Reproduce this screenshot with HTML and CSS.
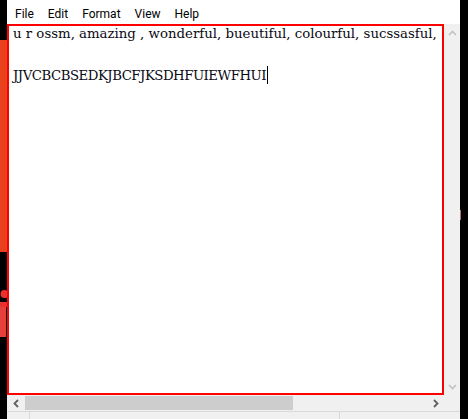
FILE: index.html
```html
<!DOCTYPE html>
<html>
<head>
<meta charset="utf-8">
<link rel="stylesheet" href="styles.css">
</head>
<body>
<div class="side-left">
  <svg width="7" height="419" viewBox="0 0 7 419">
    <rect x="0" y="0" width="7" height="419" fill="#000"/>
    <rect x="0" y="40" width="7" height="212" fill="#e8411b"/>
    <circle cx="4.5" cy="294" r="4" fill="#e8322f"/>
    <rect x="0" y="302" width="7" height="5" fill="#e8322f"/>
    <rect x="0" y="307" width="6" height="30" fill="#e6403d"/>
  </svg>
</div>
<div class="window">
  <div class="menubar">
    <span class="menu-item">File</span>
    <span class="menu-item">Edit</span>
    <span class="menu-item">Format</span>
    <span class="menu-item">View</span>
    <span class="menu-item">Help</span>
  </div>
  <div class="main">
    <div class="editor">
      <div class="text">u r ossm, amazing , wonderful, bueutiful, colourful, sucssasful,</div>
      <div class="text">&nbsp;</div>
      <div class="text caps">JJVCBCBSEDKJBCFJKSDHFUIEWFHUI<span class="caret"></span></div>
    </div>
    <div class="vscroll">
      <div class="sbtn">
        <svg width="9" height="6" viewBox="0 0 9 6"><path d="M1 5 L4.5 1.5 L8 5" fill="none" stroke="#c2c2c2" stroke-width="1.6"/></svg>
      </div>
      <div class="sbtn">
        <svg width="9" height="6" viewBox="0 0 9 6"><path d="M1 1 L4.5 4.5 L8 1" fill="none" stroke="#c2c2c2" stroke-width="1.6"/></svg>
      </div>
    </div>
  </div>
  <div class="hrow">
    <div class="hscroll">
      <div class="hbtn">
        <svg width="6" height="9" viewBox="0 0 6 9"><path d="M5 1 L1.5 4.5 L5 8" fill="none" stroke="#606060" stroke-width="1.8"/></svg>
      </div>
      <div class="track">
        <div class="thumb"></div>
      </div>
      <div class="hbtn">
        <svg width="6" height="9" viewBox="0 0 6 9"><path d="M1 1 L4.5 4.5 L1 8" fill="none" stroke="#606060" stroke-width="1.8"/></svg>
      </div>
    </div>
    <div class="corner"></div>
  </div>
  <div class="status">
    <div class="cell cell-a"></div>
    <div class="cell cell-b"></div>
    <div class="cell cell-c"></div>
  </div>
</div>
<div class="side-right">
  <div class="mark"></div>
</div>
</body>
</html>
```
FILE: styles.css
```css
html, body {
  margin: 0;
  padding: 0;
}
body {
  width: 468px;
  height: 419px;
  overflow: hidden;
  display: flex;
  background: #000;
}
.side-left {
  width: 7px;
  height: 419px;
  flex: none;
}
.side-left svg {
  display: block;
}
.window {
  width: 453px;
  height: 419px;
  flex: none;
  display: flex;
  flex-direction: column;
  background: #fff;
}
.menubar {
  height: 24px;
  box-sizing: border-box;
  padding: 4px 0 0 1px;
  display: flex;
  font-family: Roboto, "Noto Sans", sans-serif;
  font-size: 12px;
  line-height: 20px;
  color: #000;
}
.menu-item {
  padding: 0 7px;
}
.main {
  height: 371px;
  display: flex;
}
.editor {
  width: 437px;
  height: 371px;
  box-sizing: border-box;
  border: 2px solid #ff0000;
  padding: 0 0 0 4px;
  overflow: hidden;
  background: #fff;
}
.text {
  font-family: "DejaVu Serif", serif;
  font-size: 13.3px;
  line-height: 21px;
  color: #0a0a14;
  white-space: pre;
  position: relative;
  top: -3px;
}
.caps {
  letter-spacing: -0.5px;
}
.caret {
  display: inline-block;
  width: 1px;
  height: 18px;
  background: #000;
  vertical-align: -4px;
  margin-left: 1px;
}
.vscroll {
  width: 16px;
  height: 371px;
  background: #f0f0f0;
  display: flex;
  flex-direction: column;
  justify-content: space-between;
}
.sbtn {
  height: 17px;
  display: flex;
  align-items: center;
  justify-content: center;
}
.sbtn svg {
  display: block;
}
.hrow {
  height: 16px;
  display: flex;
}
.hscroll {
  width: 437px;
  height: 16px;
  background: #f0f0f0;
  display: flex;
}
.hbtn {
  width: 17px;
  height: 16px;
  flex: none;
  display: flex;
  align-items: center;
  justify-content: center;
}
.hbtn svg {
  display: block;
}
.track {
  flex: 1;
  padding: 1px 0;
  box-sizing: border-box;
  display: flex;
}
.thumb {
  width: 268px;
  height: 14px;
  margin-left: 1px;
  background: #cdcdcd;
}
.corner {
  width: 16px;
  height: 16px;
  background: #f0f0f0;
}
.status {
  height: 8px;
  box-sizing: border-box;
  border-top: 1px solid #d9d9d9;
  background: #f0f0f0;
  display: flex;
}
.cell {
  height: 7px;
}
.cell-a {
  width: 22px;
  border-right: 1px solid #d9d9d9;
}
.cell-b {
  width: 309px;
  border-right: 1px solid #d9d9d9;
}
.cell-c {
  flex: 1;
}
.side-right {
  width: 8px;
  height: 419px;
  flex: none;
  background: #000;
  display: flex;
  flex-direction: column;
  padding-top: 210px;
  box-sizing: border-box;
}
.mark {
  width: 1px;
  height: 10px;
  background: #a87070;
}
```
